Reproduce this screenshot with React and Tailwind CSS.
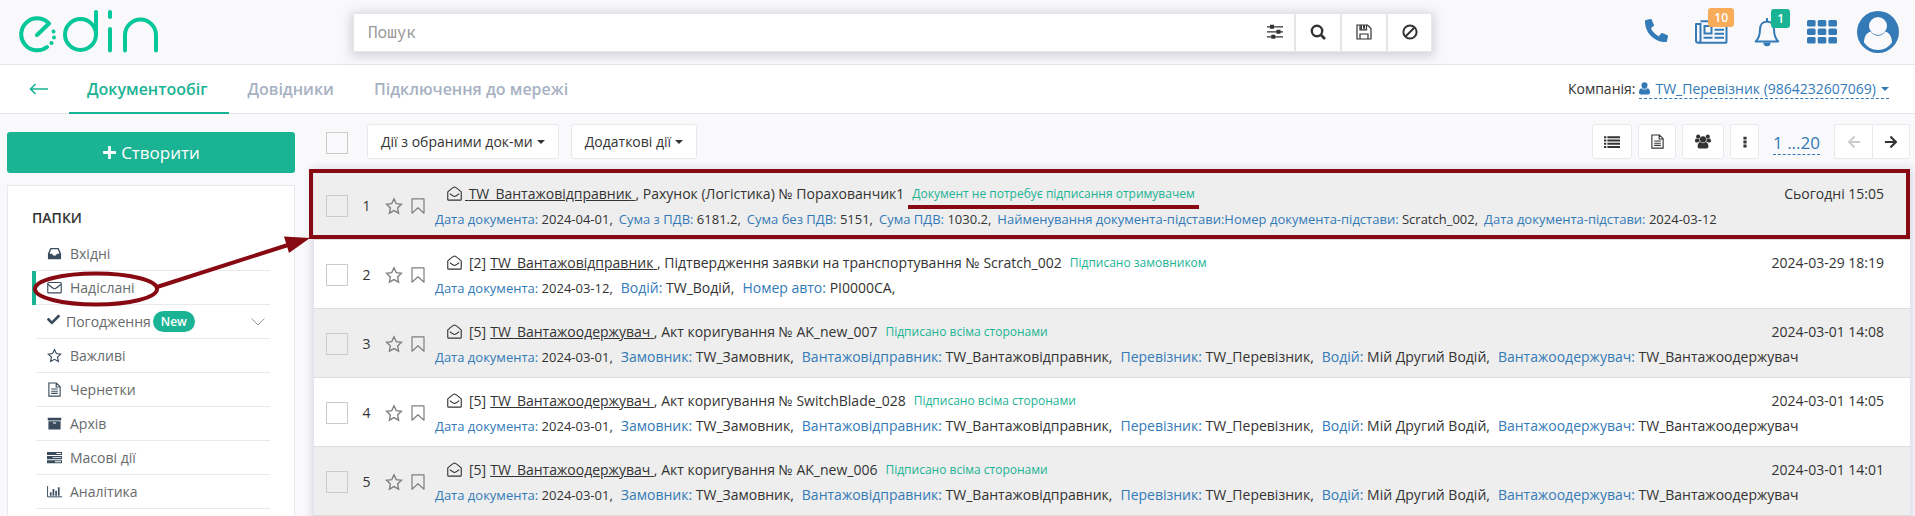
import React from "react";
import { FaPhoneAlt, FaPlus, FaCheck, FaArrowLeft, FaArrowRight } from "react-icons/fa";

const STAR = "M8 1.6l2 4.3 4.6.6-3.4 3.2.9 4.7L8 12.1l-4.1 2.3.9-4.7L1.4 6.5 6 5.9z";

const Svg = ({ className = "size-4", box = "0 0 16 16", children }) => (
  <svg viewBox={box} className={className} fill="none" stroke="currentColor" strokeWidth="1.2" aria-hidden="true">
    {children}
  </svg>
);

const StarIcon = ({ className }) => <Svg className={className}><path d={STAR} /></Svg>;
const BookmarkIcon = ({ className }) => (
  <Svg className={className} box="0 0 14 16"><path d="M1 .8h12v14.4l-6-5.4-6 5.4z" strokeLinejoin="round" /></Svg>
);
const OpenMailIcon = ({ className }) => (
  <Svg className={className}>
    <path d="M.8 6.3V14c0 .7.4 1 1 1h12.4c.6 0 1-.3 1-1V6.3C12.500 4.200 9.500 1 8 1S3.500 4.200.8 6.300z" />
    <path d="M3 8.200c1.800 1.500 3.700 3 5 3s3.200-1.500 5-3" />
  </Svg>
);
const MailIcon = ({ className }) => (
  <Svg className={className}>
    <rect x=".8" y="2.700" width="14.400" height="11" rx="1" />
    <path d="M1 4.500c2.500 2 5.400 4.800 7 4.800s4.500-2.800 7-4.800" />
  </Svg>
);
const InboxIcon = ({ className }) => (
  <Svg className={className}>
    <path fill="currentColor" fillRule="evenodd" stroke="none" d="M3.600 2h8.800l2.600 6v5.200c0 .5-.3.800-.8.800H1.800c-.5 0-.8-.3-.8-.8V8zM4.500 3.500 2.700 8.200h2.800l.9 2h3.200l.9-2h2.800L11.500 3.500z" />
  </Svg>
);
const FileIcon = ({ className }) => (
  <Svg className={className}>
    <path d="M2 1h8l4 4v10H2zM9.800 1v4.300H14M4.500 7.500h7M4.500 9.800h7M4.500 12.100h7" />
  </Svg>
);
const ArchiveIcon = ({ className }) => (
  <Svg className={className}>
    <path fill="currentColor" fillRule="evenodd" stroke="none" d="M.800 1.800h14.400v3H.800zM1.500 5.600h13v8.900h-13zM6.300 6.800v1.100h3.400V6.800z" />
  </Svg>
);
const TasksIcon = ({ className }) => (
  <Svg className={className}>
    <path fill="currentColor" fillRule="evenodd" stroke="none" d="M0 2h16v3.400H0zM10 3.200v1h5v-1zM0 6.400h16v3.400H0zM6 7.600v1h9v-1zM0 10.800h16v3.400H0zM8.500 12v1H15v-1z" />
  </Svg>
);
const ChartIcon = ({ className }) => (
  <Svg className={className} box="0 0 18 16">
    <path d="M.700 1.500v12.900H18" />
    <path d="M4.500 13V9M7.700 13V5M10.900 13V7M14.100 13V3" strokeWidth="2" />
  </Svg>
);
const SlidersIcon = ({ className }) => (
  <Svg className={className}>
    <path d="M0 2.800h16M0 7.800h16M0 12.800h16" />
    <path d="M5 .8v4M11.500 5.800v4M6.300 10.800v4" strokeWidth="4" />
  </Svg>
);
const SearchIcon = ({ className }) => (
  <Svg className={className}>
    <circle cx="7" cy="7" r="5.200" strokeWidth="2.400" />
    <path d="M10.800 10.800 15 15" strokeWidth="2.800" />
  </Svg>
);
const SaveIcon = ({ className }) => (
  <Svg className={className}>
    <path d="M1 1h10.500L15 4.500V15H1zM4 15v-5h8v5M4 1v4.800h6.500V1" />
    <path d="M7 1.200h2v3.500H7zM4.500 1.200H6v4H4.500z" fill="currentColor" stroke="none" />
  </Svg>
);
const BanIcon = ({ className }) => (
  <Svg className={className}><circle cx="8" cy="8" r="6.600" strokeWidth="2" /><path d="m3.500 12.500 9-9" strokeWidth="2" /></Svg>
);
const ListIcon = ({ className }) => (
  <Svg className={className}>
    <path d="M0 3.200h2.300M0 6.500h2.300M0 9.800h2.300M0 13.100h2.300M3.400 3.200H16M3.400 6.500H16M3.400 9.800H16M3.400 13.100H16" strokeWidth="2" />
  </Svg>
);
const UsersIcon = ({ className }) => (
  <Svg className={className} box="0 0 16 15">
    <g fill="currentColor" stroke="none">
      <circle cx="8" cy="5.400" r="3.100" />
      <circle cx="3.200" cy="2.700" r="2.100" />
      <circle cx="12.800" cy="2.700" r="2.100" />
      <path d="M5.300 8.100c.8.700 1.700 1.100 2.700 1.100s1.900-.4 2.700-1.100c1.800.2 2.700 2 2.700 4.500 0 1.300-.8 2-1.900 2h-7c-1.100 0-1.900-.7-1.900-2 0-2.500.9-4.300 2.700-4.500z" />
      <path d="M1.200 4.500c.6.400 1.300.6 2 .6.400 0 .8-.1 1.200-.2-.1 1 .1 1.800.6 2.600-.9 0-1.600.3-2.200.9H1.500C.600 8.400 0 8 0 7.200 0 6 .300 4.700 1.200 4.500zM14.800 4.500c-.6.4-1.300.6-2 .6-.4 0-.8-.1-1.200-.2.1 1-.1 1.800-.6 2.600.9 0 1.600.3 2.200.9h1.300c.9 0 1.500-.4 1.500-1.200 0-1.200-.3-2.500-1.200-2.700z" />
    </g>
  </Svg>
);
const DotsIcon = ({ className }) => (
  <Svg className={className}>
    <path d="M6.200 1.900h3.600v3.300H6.200zM6.200 6.400h3.600v3.300H6.200zM6.200 10.900h3.600v3.300H6.200z" fill="currentColor" stroke="none" />
  </Svg>
);
const UserIcon = ({ className }) => (
  <Svg className={className} box="0 0 11 13">
    <path fill="currentColor" stroke="none" d="M5.500.3a3 3 0 0 1 3 3.100c0 1.900-1.300 3.400-3 3.400s-3-1.500-3-3.400a3 3 0 0 1 3-3.100zM2.400 6.200c.9.900 1.900 1.300 3.100 1.300s2.200-.4 3.100-1.300C10.300 6.500 11 8.200 11 10.600c0 1.200-.7 2-1.800 2H1.800c-1.100 0-1.800-.8-1.800-2 0-2.400.7-4.100 2.400-4.400z" />
  </Svg>
);
const Caret = ({ className }) => (
  <svg viewBox="0 0 8 4" className={className} fill="currentColor" aria-hidden="true"><path d="M0 0h8L4 4z" /></svg>
);

const Logo = () => (
  <svg viewBox="0 0 140 44" className="h-11 w-[140px]" fill="none" stroke="#06c799" strokeWidth="4" strokeLinecap="round" role="img" aria-label="edin">
    <path d="M18 26 30 14.500A16 16 0 1 0 28 38" strokeLinejoin="round" />
    <circle cx="61.500" cy="25.500" r="15.500" />
    <path d="M77 3v22.500M91 3v5M91 20v21.500M106 41.500V26a15.500 15.500 0 0 1 31 0V41.500" />
    <g fill="#06c799" stroke="none">
      <circle cx="34.500" cy="22.500" r="1.900" /><circle cx="35" cy="28.500" r="2" /><circle cx="32.500" cy="34" r="2.100" />
    </g>
  </svg>
);

const NewsIcon = () => (
  <svg viewBox="0 0 33 24" className="h-6 w-[33px]" fill="none" stroke="currentColor" strokeWidth="2" aria-hidden="true">
    <path d="M5.500 1.200h26v20c0 .9-.5 1.600-1.500 1.600H3.500c-1.500 0-2.500-.8-2.500-2.200V4h4.500" strokeLinejoin="round" />
    <path d="M5.500 3v17.500c0 1.300-.8 2.200-2 2.200M9.500 6h7v7.500h-7zM19.500 5.800H29M19.500 9.800H29M19.500 13.700H29M8.500 17.700h9M19.500 17.700H29" />
  </svg>
);
const BellIcon = () => (
  <svg viewBox="0 0 26 29" className="h-[29px] w-[26px]" fill="none" stroke="currentColor" strokeWidth="2" aria-hidden="true">
    <path d="M13 3.500c-4.300 0-7 3.300-7 7.800 0 7-1.800 9.700-4.300 12.200h22.600c-2.500-2.500-4.300-5.200-4.300-12.200 0-4.500-2.700-7.800-7-7.800z" strokeLinejoin="round" />
    <path d="M13 .7v2.800" strokeLinecap="round" />
    <path d="M9.300 24.500a3.700 3.700 0 0 0 7.400 0z" fill="currentColor" stroke="none" />
  </svg>
);
const GridIcon = () => (
  <svg viewBox="0 0 30 24" className="h-6 w-[30px]" fill="currentColor" aria-hidden="true">
    {[0, 8.500, 17].map((y) => [0, 10.700, 21.400].map((x) => (
      <rect key={`${x}-${y}`} x={x} y={y} width="8.600" height="6.500" rx="1.500" />
    )))}
  </svg>
);
const Avatar = () => (
  <svg viewBox="0 0 42 42" className="size-[42px]" aria-hidden="true">
    <circle cx="21" cy="21" r="21" fill="#337ab7" />
    <circle cx="21" cy="15" r="9" fill="#f9f9fb" />
    <path d="M13.500 20.500C9 22 7 26.500 7 31.500 10 36 15 39 21 39s11-3 14-7.500c0-5-2-9.500-6.500-11C26.500 23 24 24.800 21 24.800s-5.500-1.800-7.500-4.300z" fill="#f9f9fb" />
  </svg>
);

const tabs = ["Довідники", "Підключення до мережі"];

const folders = [
  { name: "Вхідні", Icon: InboxIcon },
  { name: "Надіслані", Icon: MailIcon, active: true },
  { name: "Погодження", Icon: FaCheck, badge: "New" },
  { name: "Важливі", Icon: StarIcon },
  { name: "Чернетки", Icon: FileIcon },
  { name: "Архів", Icon: ArchiveIcon },
  { name: "Масові дії", Icon: TasksIcon },
  { name: "Аналітика", Icon: ChartIcon },
];

const route = [
  ["Замовник:", "TW_Замовник,"],
  ["Вантажовідправник:", "TW_Вантажовідправник,"],
  ["Перевізник:", "TW_Перевізник,"],
  ["Водій:", "Мій Другий Водій,"],
  ["Вантажоодержувач:", "TW_Вантажоодержувач"],
];

const documents = [
  {
    sender: "TW_Вантажовідправник", title: "Рахунок (Логістика) № Порахованчик1",
    status: "Документ не потребує підписання отримувачем", time: "Сьогодні 15:05", date: "2024-04-01,",
    marked: true, compact: true,
    fields: [
      ["Сума з ПДВ:", "6181.2,"], ["Сума без ПДВ:", "5151,"], ["Сума ПДВ:", "1030.2,"],
      ["Найменування документа-підстави:Номер документа-підстави:", "Scratch_002,"],
      ["Дата документа-підстави:", "2024-03-12"],
    ],
  },
  {
    count: "[2]", sender: "TW_Вантажовідправник", title: "Підтвердження заявки на транспортування № Scratch_002",
    status: "Підписано замовником", time: "2024-03-29 18:19", date: "2024-03-12,",
    fields: [["Водій:", "TW_Водій,"], ["Номер авто:", "PI0000CA,"]],
  },
  { count: "[5]", sender: "TW_Вантажоодержувач", title: "Акт коригування № AK_new_007", status: "Підписано всіма сторонами", time: "2024-03-01 14:08", date: "2024-03-01,", fields: route },
  { count: "[5]", sender: "TW_Вантажоодержувач", title: "Акт коригування № SwitchBlade_028", status: "Підписано всіма сторонами", time: "2024-03-01 14:05", date: "2024-03-01,", fields: route },
  { count: "[5]", sender: "TW_Вантажоодержувач", title: "Акт коригування № AK_new_006", status: "Підписано всіма сторонами", time: "2024-03-01 14:01", date: "2024-03-01,", fields: route },
];

const checkbox = "block size-[22px] shrink-0 appearance-none border border-[#cfcbc4] checked:bg-[#1ab394]";
const button = "flex h-[35px] items-center justify-center rounded-[3px] border border-[#e7eaec] bg-white";

function Header() {
  return (
    <header className="flex h-[65px] items-center border-b border-[#e4e7ea] bg-[#f9f9fb]">
      <a href="#home" className="flex w-[353px] shrink-0 pl-[19px] pb-[3px]"><Logo /></a>
      <form className="flex h-[39px] min-w-0 flex-1 border border-[#e5e6e7] bg-white shadow-[0_2px_10px_2px_rgba(100,105,145,0.28)]">
        <input aria-label="Пошук" placeholder="Пошук" className="min-w-0 flex-1 px-3.5 font-['Noto_Sans_Mono','DejaVu_Sans_Mono',monospace] text-base outline-none placeholder:text-[#999]" />
        <button type="button" aria-label="Фільтри" className="flex w-[38px] items-center justify-center"><SlidersIcon className="size-4" /></button>
        <button type="button" aria-label="Знайти" className="flex w-[46px] items-center justify-center border-l-2 border-[#e5e6e7]"><SearchIcon className="size-4" /></button>
        <button type="button" aria-label="Зберегти" className="flex w-[46px] items-center justify-center border-l-2 border-[#e5e6e7]"><SaveIcon className="size-4" /></button>
        <button type="button" aria-label="Скинути" className="flex w-[45px] items-center justify-center border-l-2 border-[#e5e6e7]"><BanIcon className="size-4" /></button>
      </form>
      <div className="flex w-[483px] shrink-0 items-center justify-end pr-4 text-[#337ab7]">
        <button aria-label="Телефон" className="mr-[27px] pb-1"><FaPhoneAlt className="size-[23px]" /></button>
        <button aria-label="Новини" className="relative mr-[26px]">
          <NewsIcon />
          <span className="absolute -right-1.5 -top-3 rounded-[3px] bg-[#f8ac59] px-1.5 text-xs font-semibold leading-[19px] text-white">10</span>
        </button>
        <button aria-label="Сповіщення" className="relative mr-[27px]">
          <BellIcon />
          <span className="absolute -right-2.5 -top-[9px] rounded-[3px] bg-[#1ab394] px-1.5 text-xs font-semibold leading-[19px] text-white">1</span>
        </button>
        <button aria-label="Сервіси" className="mr-5"><GridIcon /></button>
        <button aria-label="Профіль"><Avatar /></button>
      </div>
    </header>
  );
}

function Nav() {
  return (
    <nav className="flex h-[49px] items-stretch border-b border-[#e4e7ea] bg-white">
      <a href="#back" aria-label="Назад" className="flex w-[69px] items-center pl-[29px] text-[#1ab394]">
        <svg viewBox="0 0 19 12" className="h-3 w-[19px]" fill="none" stroke="currentColor" strokeWidth="1.600" aria-hidden="true"><path d="M19 6H1.500M6.500 1l-5 5 5 5" /></svg>
      </a>
      <a href="#documents" className="-mb-px flex items-center border-b-2 border-[#1ab394] pl-[18px] pr-[22px] text-base font-semibold text-[#1ab394]">Документообіг</a>
      {tabs.map((tab) => (
        <a key={tab} href="#tab" className="flex items-center pl-[18px] pr-[22px] text-base font-semibold text-[#a7b1c2]">{tab}</a>
      ))}
      <div className="ml-auto flex items-center gap-1 pr-[26px] text-sm">
        <span>Компанія:</span>
        <a href="#company" className="flex items-center gap-[5px] border-b border-dashed border-[#337ab7] leading-[19px] text-[#337ab7]">
          <UserIcon className="h-[13px] w-[11px]" />
          TW_Перевізник (9864232607069)
          <Caret className="h-1 w-2" />
        </a>
      </div>
    </nav>
  );
}

function Folder({ name, Icon, active, badge }) {
  return (
    <li className="relative flex h-[34px] border-b border-[#e7eaec]">
      {active && <span className="absolute -left-1 top-0 h-[34px] w-1 bg-[#1ab394]" />}
      <a href="#folder" className="flex flex-1 items-center pl-[11px] text-sm text-[#676a6c]">
        <Icon className={badge ? "mb-1 mr-1.5 size-[13px] text-[#3a4b5e]" : "mr-2 size-[15px] text-[#3a4b5e]"} />
        {name}
        {badge && <span className="ml-0.5 rounded-full bg-[#1ab394] px-2 text-xs font-semibold leading-[21px] text-white">{badge}</span>}
        {badge && (
          <svg viewBox="0 0 14 8" className="ml-auto mr-[5px] h-2 w-3.5" fill="none" stroke="#999" aria-hidden="true"><path d="m.5.500 6.500 6.500L13.500.500" /></svg>
        )}
      </a>
      {active && (
        <svg viewBox="0 0 282 80" className="pointer-events-none absolute -left-1 -top-9 z-10 h-20 w-[282px]" aria-hidden="true">
          <ellipse cx="64" cy="54" rx="61" ry="15.500" fill="none" stroke="#870912" strokeWidth="4" />
          <path d="M125 52 256 10" stroke="#870912" strokeWidth="4" />
          <path d="M278 3 252 1.500 257 18z" fill="#870912" />
        </svg>
      )}
    </li>
  );
}

function Sidebar() {
  return (
    <aside className="flex w-72 shrink-0 flex-col gap-3 pt-[18px]">
      <button className="flex h-[41px] shrink-0 items-center justify-center gap-1 rounded-[3px] bg-[#1ab394] text-[17px] text-white">
        <FaPlus className="size-[15px]" />Створити
      </button>
      <section className="flex-1 border border-b-0 border-[#e7e8f0] bg-white pl-7 pr-6">
        <h2 className="-ml-1 mb-[9px] mt-[22px] text-sm font-semibold leading-5 text-[#333]">ПАПКИ</h2>
        <ul>{folders.map((folder) => <Folder key={folder.name} {...folder} />)}</ul>
      </section>
    </aside>
  );
}

function Toolbar() {
  return (
    <div className="flex items-center pb-3 pl-3 pt-2.5 text-sm">
      <input type="checkbox" aria-label="Обрати всі" className={`${checkbox} mt-0.5`} />
      <button className={`${button} ml-[19px] gap-1 px-[13px]`}>Дії з обраними док-ми<Caret className="h-1 w-2" /></button>
      <button className={`${button} ml-3 gap-1 px-[13px]`}>Додаткові дії<Caret className="h-1 w-2" /></button>
      <div className="ml-auto flex items-center gap-1.5">
        <button aria-label="Список" className={`${button} w-10`}><ListIcon className="size-4" /></button>
        <button aria-label="Документ" className={`${button} w-[38px]`}><FileIcon className="size-[15px]" /></button>
        <button aria-label="Користувачі" className={`${button} w-[42px]`}><UsersIcon className="h-[15px] w-4" /></button>
        <button aria-label="Ще" className={`${button} w-[29px]`}><DotsIcon className="size-3.5" /></button>
        <a href="#page" className="mx-2 mt-1 border-b border-dashed border-[#337ab7] text-[17px] leading-[22px] text-[#337ab7]">1 ...20</a>
        <div className="flex">
          <button aria-label="Попередня" disabled className={`${button} w-[38px] rounded-r-none border-r-0 text-[#ccc]`}><FaArrowLeft className="size-3.5" /></button>
          <button aria-label="Наступна" className={`${button} w-[38px] rounded-l-none`}><FaArrowRight className="size-3.5" /></button>
        </div>
      </div>
    </div>
  );
}

function DocumentRow({ doc, index }) {
  return (
    <li className="relative flex h-[69px] items-center border-b border-[#dcdcdc] pl-3 pr-[26px] pt-0.5 odd:bg-[#eee] even:bg-white">
      <input type="checkbox" aria-label={`Обрати документ ${index}`} className={checkbox} />
      <span className="w-[37px] text-center text-sm">{index}</span>
      <button aria-label="Важливий" className="mr-2 text-[#7d7f81]"><StarIcon className="size-[18px]" /></button>
      <button aria-label="Закладка" className="mr-2.5 text-[#7d7f81]"><BookmarkIcon className="h-4 w-3.5" /></button>
      <div className="min-w-0 flex-1 whitespace-nowrap">
        <div className="flex items-center pl-3 text-sm leading-5">
          <OpenMailIcon className={doc.count ? "mr-[7px] size-[15px]" : "mr-[3px] size-[15px]"} />
          {doc.count && <span className="mr-1">{doc.count}</span>}
          <a href="#document" className="whitespace-pre underline">{doc.count ? "" : " "}{doc.sender} </a>
          <span>, {doc.title}</span>
          <span className="relative ml-2 text-xs leading-5 text-[#1ab394]">
            {doc.status}
            {doc.marked && <span className="absolute -inset-x-1 top-[21px] h-1 bg-[#870912]" />}
          </span>
          <time className="ml-auto">{doc.time}</time>
        </div>
        <div className={doc.compact ? "mt-[5px] flex gap-1.5 text-[13px] leading-5" : "mt-[5px] flex gap-2 text-sm leading-5"}>
          <span className="text-[13px]"><span className="text-[#337ab7]">Дата документа:</span> {doc.date}</span>
          {doc.fields.map(([label, value]) => (
            <span key={label}><span className="text-[#337ab7]">{label}</span> {value}</span>
          ))}
        </div>
      </div>
      {doc.marked && <span className="pointer-events-none absolute -left-[5px] -top-0.5 bottom-0 right-0 border-4 border-[#870912]" />}
    </li>
  );
}

export default function App() {
  return (
    <div className="flex h-screen flex-col overflow-hidden bg-[#f9f9fb] font-['Open_Sans',sans-serif] text-[#333]">
      <Header />
      <Nav />
      <div className="flex min-h-0 flex-1 pl-[7px] pr-[5px]">
        <Sidebar />
        <main className="ml-[19px] min-w-0 flex-1">
          <Toolbar />
          <ul className="shadow-[0_0_8px_3px_rgba(100,105,145,0.2)]">
            {documents.map((doc, i) => <DocumentRow key={doc.time} doc={doc} index={i + 1} />)}
            <li className="h-[68px] bg-white" />
          </ul>
        </main>
      </div>
    </div>
  );
}
